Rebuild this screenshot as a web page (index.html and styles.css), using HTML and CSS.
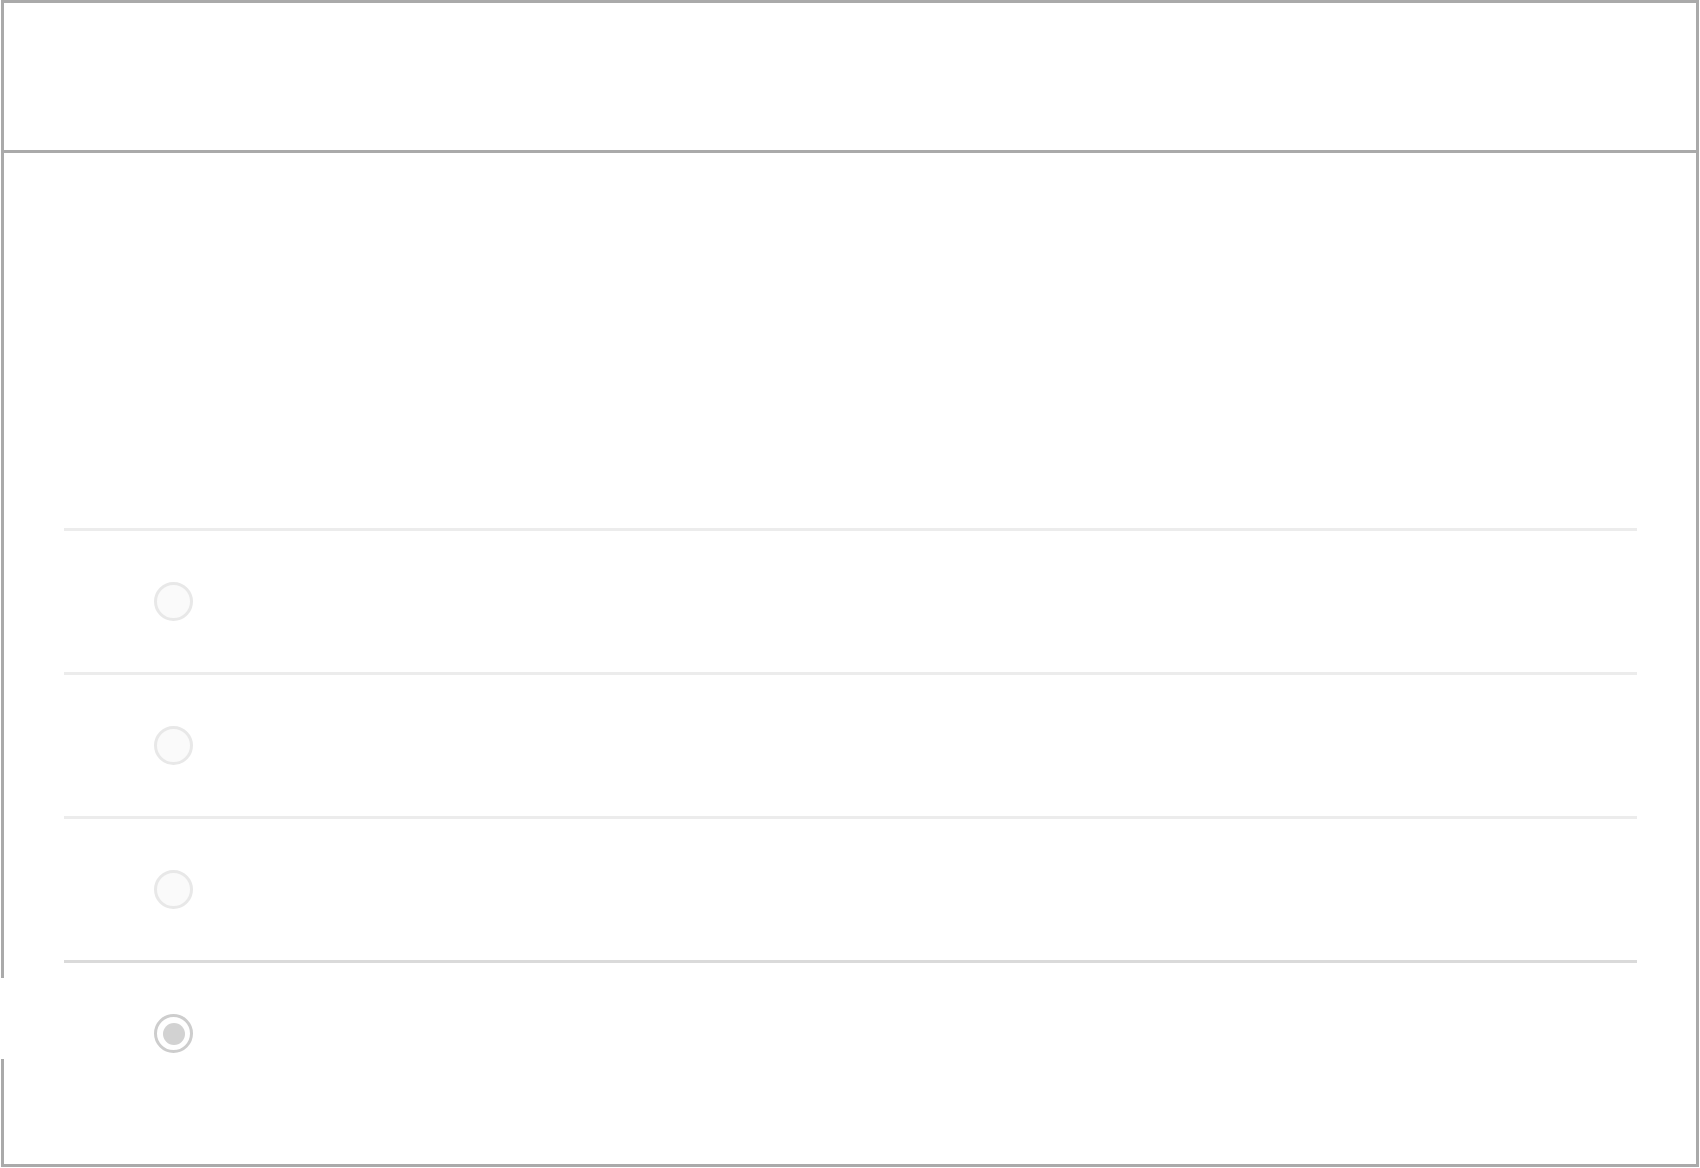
FILE: index.html
```html
<!doctype html>
<html lang="en">
<head>
    <meta charset="utf-8">
    <meta name="viewport" content="width=device-width, initial-scale=1">
    <title>Options</title>

    <link rel="stylesheet" href="styles.css">
</head>
<body>
<div class="frame">
    <div class="header"></div>

    <div class="content">
        <ul class="options">
            <li class="option">
                <span class="radio"></span>
            </li>
            <li class="option">
                <span class="radio"></span>
            </li>
            <li class="option">
                <span class="radio"></span>
            </li>
            <li class="option selected">
                <span class="focus-mark"></span>
                <span class="radio checked"></span>
            </li>
        </ul>
    </div>
</div>
</body>
</html>
```

FILE: styles.css
```css
body {
    margin: 0;
    font-family: "Liberation Sans", Arial, sans-serif;
    font-size: 1rem;
    color: #212529;
    background: #fff;
}

.frame {
    margin: 0 0 0 1px;
    width: 1698px;
    height: 1167px;
    box-sizing: border-box;
    border: 3px solid #aaa;
    display: flex;
    flex-direction: column;
}

.header {
    height: 147px;
    border-bottom: 3px solid #aaa;
    flex: none;
}

.content {
    flex: 1;
    padding: 375px 59px 0 60px;
}

.options {
    list-style: none;
    margin: 0;
    padding: 0;
}

.option {
    position: relative;
    height: 141px;
    border-top: 3px solid #ececec;
    display: flex;
    align-items: center;
    padding-left: 90px;
}

.option.selected {
    border-top-color: #dadada;
}

.radio {
    width: 39px;
    height: 39px;
    box-sizing: border-box;
    border: 3px solid #e8e8e8;
    border-radius: 50%;
    background: #fafafa;
    display: flex;
    align-items: center;
    justify-content: center;
}

.radio.checked {
    border-color: #cdcdcd;
    background: #fff;
}

.radio.checked::after {
    content: "";
    width: 22px;
    height: 22px;
    border-radius: 50%;
    background: #d2d2d2;
}

/* white strip that hides the frame edge next to the selected row */
.focus-mark {
    position: absolute;
    left: -63px;
    top: 15px;
    width: 3px;
    height: 81px;
    background: #fff;
}
```
